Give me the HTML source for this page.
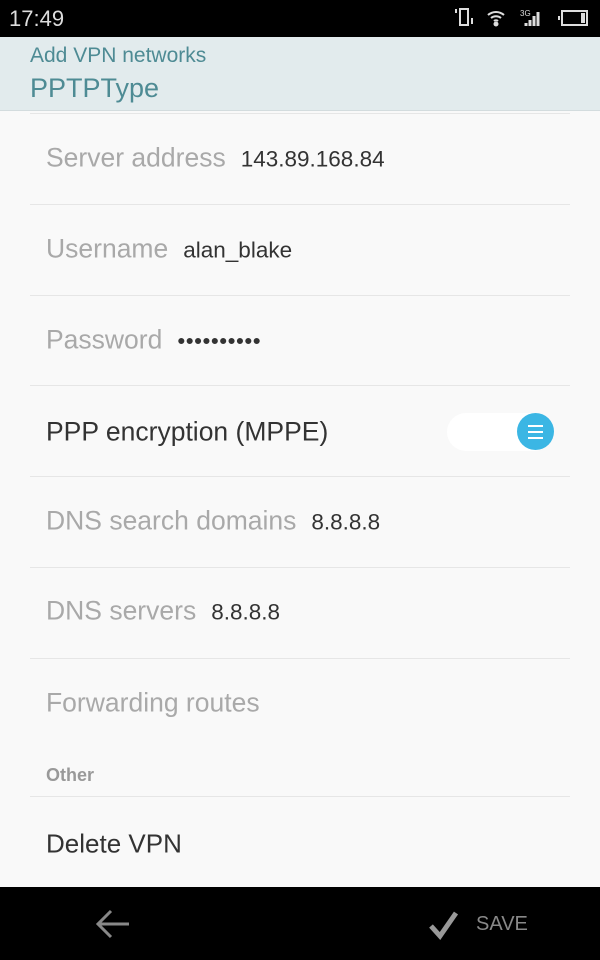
<!DOCTYPE html><html><head><style>
body{margin:0;width:600px;height:960px;background:#f9f9f9;font-family:"Liberation Sans",sans-serif;position:relative;overflow:hidden}
.a{position:absolute}
.sb{left:0;top:0;width:600px;height:37px;background:#000}
.hd{left:0;top:37px;width:600px;height:73px;background:#e2ebed;border-bottom:1px solid #d3dcde}
.ln{left:30px;width:540px;height:1px;background:#e6e6e6}
.lb{left:46px;font-size:26.5px;color:#a9a9a9;transform:translateY(-50%);white-space:nowrap}
.lb span{color:#333;font-size:22.5px;margin-left:15px}
.bb{left:0;top:887px;width:600px;height:73px;background:#000}
</style></head><body>
<div class="a sb"></div>
<div class="a" style="left:9px;top:6px;color:#ddd;font-size:22px">17:49</div>
<svg class="a" style="left:452px;top:6px" width="140" height="24" viewBox="0 0 140 24" fill="none" stroke="#ddd" stroke-width="2">
<rect x="8" y="3" width="8" height="16"/><path d="M4 3v4M20 12v6"/>
<path d="M36 9a12 12 0 0 1 16 0M39 12a8 8 0 0 1 10 0M42 15a3 3 0 0 1 4 0" /><circle cx="44" cy="18" r="1.5" fill="#ddd"/>
<path d="M74 20v-3M78 20v-6M82 20v-10M86 20v-14" stroke-width="3"/>
<text x="68" y="10" font-size="8" fill="#ddd" stroke="none">3G</text>
<rect x="110" y="5" width="25" height="14"/><path d="M107 10v4"/><rect x="130" y="8" width="2" height="8" fill="#ddd"/>
</svg>
<div class="a hd"></div>
<div class="a" style="left:30px;top:44px;font-size:21px;color:#4e8b94">Add VPN networks</div>
<div class="a" style="left:30px;top:73px;font-size:27px;color:#4e8b94">PPTPType</div>
<div class="a ln" style="top:113px"></div>
<div class="a lb" style="top:158px">Server address<span>143.89.168.84</span></div>
<div class="a ln" style="top:204px"></div>
<div class="a lb" style="top:249px">Username<span>alan_blake</span></div>
<div class="a ln" style="top:295px"></div>
<div class="a lb" style="top:340px">Password<span style="letter-spacing:0.5px">••••••••••</span></div>
<div class="a ln" style="top:385px"></div>
<div class="a lb" style="top:432px;color:#333">PPP encryption (MPPE)</div>
<div class="a" style="left:447px;top:413px;width:106px;height:38px;border-radius:19px;background:#fff"></div>
<div class="a" style="left:517px;top:413px;width:37px;height:37px;border-radius:50%;background:#3bb6e4"></div>
<div class="a" style="left:528px;top:425px;width:15px;height:2px;background:#fff;box-shadow:0 6px 0 #fff,0 12px 0 #fff"></div>
<div class="a ln" style="top:476px"></div>
<div class="a lb" style="top:521px">DNS search domains<span>8.8.8.8</span></div>
<div class="a ln" style="top:567px"></div>
<div class="a lb" style="top:611px">DNS servers<span>8.8.8.8</span></div>
<div class="a ln" style="top:658px"></div>
<div class="a lb" style="top:703px">Forwarding routes</div>
<div class="a" style="left:46px;top:765px;font-size:18px;font-weight:bold;color:#999">Other</div>
<div class="a ln" style="top:796px"></div>
<div class="a lb" style="top:844px;color:#333;font-size:26px">Delete VPN</div>
<div class="a bb"></div>
<svg class="a" style="left:95px;top:908px" width="36" height="32" fill="none" stroke="#888" stroke-width="3"><path d="M34 16H4M16 3L3 16l13 13"/></svg>
<svg class="a" style="left:428px;top:910px" width="32" height="30" fill="none" stroke="#999" stroke-width="5"><path d="M3 16l9 10L28 3"/></svg>
<div class="a" style="left:476px;top:913px;font-size:20px;color:#888">SAVE</div>
</body></html>
